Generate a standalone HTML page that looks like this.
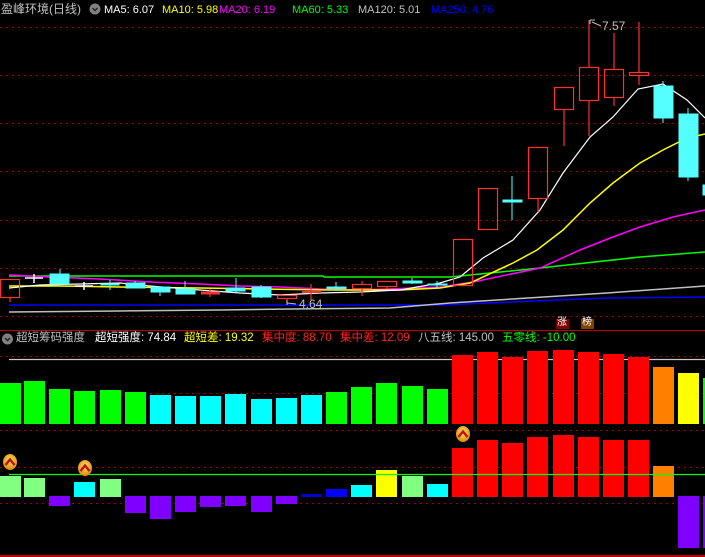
<!DOCTYPE html>
<html><head><meta charset="utf-8"><style>
html,body{margin:0;padding:0;background:#000;width:705px;height:557px;overflow:hidden;position:relative;font-family:"Liberation Sans","Noto Sans CJK SC",sans-serif;font-size:12px}
.t{position:absolute;white-space:nowrap;line-height:14px}
.m{font-size:11px;top:3px}
.l{font-size:11.5px}
</style></head><body>
<svg width="705" height="557" style="position:absolute;left:0;top:0" xmlns="http://www.w3.org/2000/svg">
<defs>
<radialGradient id="eg" cx="50%" cy="40%" r="60%"><stop offset="0" stop-color="#ffe070"/><stop offset="1" stop-color="#e08a00"/></radialGradient>
<g id="ic"><ellipse cx="0" cy="0" rx="7" ry="8" fill="url(#eg)"/><path d="M-4.5 3 L0 -2.5 L4.5 3" fill="none" stroke="#c01010" stroke-width="2.4"/></g>
</defs>
<g stroke="#a00000" stroke-width="1" stroke-dasharray="2,4">
<line x1="0" y1="27.5" x2="705" y2="27.5"/><line x1="0" y1="75.5" x2="705" y2="75.5"/><line x1="0" y1="123.5" x2="705" y2="123.5"/><line x1="0" y1="171.5" x2="705" y2="171.5"/><line x1="0" y1="220.5" x2="705" y2="220.5"/><line x1="0" y1="268.5" x2="705" y2="268.5"/><line x1="0" y1="316.5" x2="705" y2="316.5"/>
<line x1="0" y1="356.5" x2="705" y2="356.5"/><line x1="0" y1="393.5" x2="705" y2="393.5"/><line x1="0" y1="430.5" x2="705" y2="430.5"/><line x1="0" y1="467.5" x2="705" y2="467.5"/><line x1="0" y1="503.5" x2="705" y2="503.5"/>
</g>
<line x1="0" y1="330.5" x2="705" y2="330.5" stroke="#c00000"/>
<line x1="0" y1="556" x2="705" y2="556" stroke="#c00000" stroke-width="2"/>
<polyline fill="none" stroke="#0000ff" stroke-width="1.5" points="9,305 440,305 607,298 705,297"/>
<polyline fill="none" stroke="#c0c0c0" stroke-width="1.5" points="9,312 120,311 220,310 290,309 390,308 450,303 607,293 705,286"/>
<polyline fill="none" stroke="#00ff00" stroke-width="1.5" points="9,276 323,276 324,277 450,277 540,268 640,257 705,252"/>
<polyline fill="none" stroke="#ff00ff" stroke-width="1.5" points="9,275 50,277 100,279 150,282 200,284 240,286 280,287 320,289 360,290 440,287 473,282 540,268 580,250 613,237 640,227 673,217 705,210"/>
<polyline fill="none" stroke="#ffff00" stroke-width="1.5" points="9,286 60,286 120,287 200,288 260,289 330,290 400,290 440,288 470,283 513,263 537,250 563,230 590,203 613,183 640,163 663,150 687,138 705,134"/>
<polyline fill="none" stroke="#ffffff" stroke-width="1.2" points="9,288 40,285 80,284 120,283 150,286 200,290 240,293 280,295 320,293 360,292 400,290 440,283 460,277 483,258 513,240 540,210 563,173 590,137 613,117 638,89 663,84 687,100 705,118"/>
<g fill="none" stroke="#ff3030" stroke-width="1.2">
<rect x="0.5" y="279.5" width="19" height="18"/><line x1="10" y1="297" x2="10" y2="302"/>
<line x1="201" y1="293" x2="220" y2="293" stroke-width="3"/><line x1="210" y1="289" x2="210" y2="297"/>
<rect x="277.5" y="295.5" width="19" height="3"/><line x1="287" y1="298" x2="287" y2="303"/>
<line x1="302" y1="292" x2="321" y2="292" stroke-width="2"/><line x1="311" y1="284" x2="311" y2="300"/>
<rect x="352.5" y="284.5" width="19" height="4"/><line x1="362" y1="281" x2="362" y2="284"/><line x1="362" y1="289" x2="362" y2="296"/>
<rect x="377.5" y="281.5" width="19" height="5"/><line x1="387" y1="287" x2="387" y2="289"/>
<rect x="453.5" y="239.5" width="19" height="46"/>
<rect x="478.5" y="188.5" width="19" height="41"/>
<rect x="528.5" y="147.5" width="19" height="51"/><line x1="538" y1="199" x2="538" y2="212"/>
<rect x="554.5" y="87.5" width="19" height="22"/><line x1="564" y1="110" x2="564" y2="146"/>
<rect x="579.5" y="67.5" width="19" height="33"/><line x1="589" y1="20" x2="589" y2="67"/><line x1="589" y1="101" x2="589" y2="136"/>
<rect x="604.5" y="69.5" width="19" height="28"/><line x1="614" y1="33" x2="614" y2="69"/><line x1="614" y1="98" x2="614" y2="106"/>
<rect x="629.5" y="72.5" width="19" height="3"/><line x1="639" y1="22" x2="639" y2="72"/><line x1="639" y1="76" x2="639" y2="85"/>
</g>
<g fill="#54ffff" stroke="#54ffff">
<rect x="50" y="274" width="19" height="10"/><line x1="60" y1="269" x2="60" y2="274"/>
<rect x="101" y="284" width="18" height="1"/><line x1="110" y1="280" x2="110" y2="290"/>
<rect x="126" y="283" width="19" height="5"/><line x1="135" y1="281" x2="135" y2="283"/>
<rect x="151" y="287" width="19" height="5"/><line x1="160" y1="292" x2="160" y2="296"/>
<rect x="176" y="289" width="19" height="5"/><line x1="185" y1="281" x2="185" y2="293"/>
<rect x="226" y="288" width="19" height="3"/><line x1="236" y1="278" x2="236" y2="293"/>
<rect x="252" y="287" width="19" height="10"/><line x1="261" y1="285" x2="261" y2="298"/>
<rect x="327" y="287" width="19" height="1.5"/><line x1="336" y1="282" x2="336" y2="291"/>
<rect x="403" y="281" width="19" height="2"/><line x1="412" y1="278" x2="412" y2="284"/>
<rect x="428" y="284" width="19" height="1"/><line x1="437" y1="281" x2="437" y2="288"/>
<rect x="503" y="200" width="19" height="2"/><line x1="512" y1="176" x2="512" y2="220"/>
<rect x="654" y="86" width="19" height="32"/><line x1="663" y1="81" x2="663" y2="123"/>
<rect x="679" y="114" width="19" height="63"/><line x1="688" y1="108" x2="688" y2="181"/>
<rect x="703" y="185" width="3" height="10"/>
</g>
<g stroke="#ffffff" stroke-width="1.5">
<line x1="25" y1="278" x2="43" y2="278"/><line x1="34" y1="274" x2="34" y2="283"/>
<line x1="75" y1="286" x2="93" y2="286"/><line x1="84" y1="282" x2="84" y2="290"/>
</g>
<g stroke="#c0c0c0" fill="none"><path d="M287 300 L287 305 M287 303 L296 304"/><path d="M590 20 L595 20 M590 20 L590 24 M592 22 L601 26"/></g>
<text x="299" y="308" fill="#c0c0c0" font-family="Liberation Sans" font-size="12">4.64</text>
<text x="602" y="30" fill="#c0c0c0" font-family="Liberation Sans" font-size="12">7.57</text>
<line x1="9" y1="359.5" x2="705" y2="359.5" stroke="#c8c8c8" stroke-width="1.2"/>
<g>
<rect x="0" y="383" width="21" height="41" fill="#00ff00"/>
<rect x="24" y="381" width="21" height="43" fill="#00ff00"/>
<rect x="49" y="389" width="21" height="35" fill="#00ff00"/>
<rect x="74" y="391" width="21" height="33" fill="#00ff00"/>
<rect x="100" y="390" width="21" height="34" fill="#00ff00"/>
<rect x="125" y="392" width="21" height="32" fill="#00ff00"/>
<rect x="150" y="395" width="21" height="29" fill="#00ffff"/>
<rect x="175" y="396" width="21" height="28" fill="#00ffff"/>
<rect x="200" y="396" width="21" height="28" fill="#00ffff"/>
<rect x="225" y="394" width="21" height="30" fill="#00ffff"/>
<rect x="251" y="399" width="21" height="25" fill="#00ffff"/>
<rect x="276" y="398" width="21" height="26" fill="#00ffff"/>
<rect x="301" y="395" width="21" height="29" fill="#00ffff"/>
<rect x="326" y="392" width="21" height="32" fill="#00ff00"/>
<rect x="351" y="387" width="21" height="37" fill="#00ff00"/>
<rect x="376" y="383" width="21" height="41" fill="#00ff00"/>
<rect x="402" y="386" width="21" height="38" fill="#00ff00"/>
<rect x="427" y="389" width="21" height="35" fill="#00ff00"/>
<rect x="452" y="355" width="21" height="69" fill="#ff0000"/>
<rect x="477" y="352" width="21" height="72" fill="#ff0000"/>
<rect x="502" y="357" width="21" height="67" fill="#ff0000"/>
<rect x="527" y="351" width="21" height="73" fill="#ff0000"/>
<rect x="553" y="350" width="21" height="74" fill="#ff0000"/>
<rect x="578" y="352" width="21" height="72" fill="#ff0000"/>
<rect x="603" y="354" width="21" height="70" fill="#ff0000"/>
<rect x="628" y="357" width="21" height="67" fill="#ff0000"/>
<rect x="653" y="367" width="21" height="57" fill="#ff8000"/>
<rect x="678" y="373" width="21" height="51" fill="#ffff00"/>
<rect x="703" y="378" width="2" height="46" fill="#00ff00"/>
</g>
<g>
<rect x="0" y="476" width="21" height="21" fill="#80ff80"/>
<rect x="24" y="478" width="21" height="19" fill="#80ff80"/>
<rect x="49" y="496" width="21" height="10" fill="#8000ff"/>
<rect x="74" y="482" width="21" height="15" fill="#00ffff"/>
<rect x="100" y="479" width="21" height="18" fill="#80ff80"/>
<rect x="125" y="496" width="21" height="17" fill="#8000ff"/>
<rect x="150" y="496" width="21" height="23" fill="#8000ff"/>
<rect x="175" y="496" width="21" height="16" fill="#8000ff"/>
<rect x="200" y="496" width="21" height="11" fill="#8000ff"/>
<rect x="225" y="496" width="21" height="10" fill="#8000ff"/>
<rect x="251" y="496" width="21" height="16" fill="#8000ff"/>
<rect x="276" y="496" width="21" height="8" fill="#8000ff"/>
<rect x="301" y="494" width="21" height="3" fill="#0000d0"/>
<rect x="326" y="489" width="21" height="8" fill="#0000ff"/>
<rect x="351" y="485" width="21" height="12" fill="#00ffff"/>
<rect x="376" y="470" width="21" height="27" fill="#ffff00"/>
<rect x="402" y="476" width="21" height="21" fill="#80ff80"/>
<rect x="427" y="484" width="21" height="13" fill="#00ffff"/>
<rect x="452" y="448" width="21" height="49" fill="#ff0000"/>
<rect x="477" y="440" width="21" height="57" fill="#ff0000"/>
<rect x="502" y="443" width="21" height="54" fill="#ff0000"/>
<rect x="527" y="437" width="21" height="60" fill="#ff0000"/>
<rect x="553" y="435" width="21" height="62" fill="#ff0000"/>
<rect x="578" y="437" width="21" height="60" fill="#ff0000"/>
<rect x="603" y="440" width="21" height="57" fill="#ff0000"/>
<rect x="628" y="440" width="21" height="57" fill="#ff0000"/>
<rect x="653" y="466" width="21" height="31" fill="#ff8000"/>
<rect x="678" y="496" width="21" height="52" fill="#8000ff"/>
<rect x="703" y="496" width="2" height="52" fill="#8000ff"/>
</g>
<line x1="9" y1="474.5" x2="705" y2="474.5" stroke="#00ff00" stroke-width="1.2"/>
<use href="#ic" x="10" y="462"/>
<use href="#ic" x="85" y="468"/>
<use href="#ic" x="463" y="434"/>
<circle cx="95" cy="9" r="5.5" fill="#808080"/><path d="M92.5 8 L95 10.5 L97.5 8" fill="none" stroke="#222" stroke-width="1.4"/>
<circle cx="7.5" cy="339" r="5.5" fill="#808080"/><path d="M5 338 L7.5 340.5 L10 338" fill="none" stroke="#222" stroke-width="1.4"/>
<rect x="556" y="319" width="13" height="10" fill="#800000"/><rect x="581" y="319" width="13" height="10" fill="#804000"/>
</svg>
<div class="t" style="left:1px;top:2px;color:#c0c0c0">盈峰环境(日线)</div>
<div class="t m" style="left:104px;color:#ffffff">MA5: 6.07</div>
<div class="t m" style="left:162px;color:#ffff00">MA10: 5.98</div>
<div class="t m" style="left:219px;color:#ff00ff">MA20: 6.19</div>
<div class="t m" style="left:292px;color:#00ff00">MA60: 5.33</div>
<div class="t m" style="left:358px;color:#c0c0c0">MA120: 5.01</div>
<div class="t m" style="left:431px;color:#0000ff">MA250: 4.76</div>
<div class="t" style="left:557px;top:316px;color:#ffffff;font-size:10px">涨</div>
<div class="t" style="left:582px;top:316px;color:#ffffff;font-size:10px">榜</div>
<div class="t l" style="left:16px;top:331px;color:#c0c0c0">超短筹码强度</div>
<div class="t l" style="left:95px;top:331px;color:#ffffff">超短强度: 74.84</div>
<div class="t l" style="left:184px;top:331px;color:#ffff00">超短差: 19.32</div>
<div class="t l" style="left:262px;top:331px;color:#ff2020">集中度: 88.70</div>
<div class="t l" style="left:340px;top:331px;color:#ff2020">集中差: 12.09</div>
<div class="t l" style="left:418px;top:331px;color:#c0c0c0">八五线: 145.00</div>
<div class="t l" style="left:502px;top:331px;color:#00ff00">五零线: -10.00</div>
</body></html>
